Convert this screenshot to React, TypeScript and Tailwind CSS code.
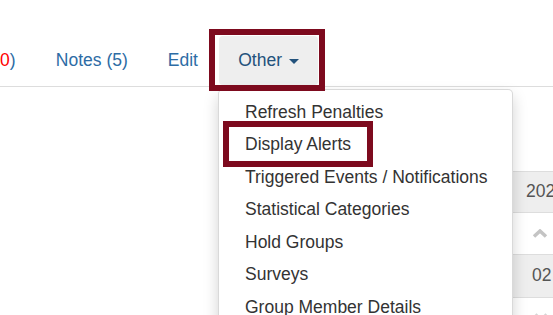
import React from "react";

const menuItems = [
  "Refresh Penalties",
  "Display Alerts",
  "Triggered Events / Notifications",
  "Statistical Categories",
  "Hold Groups",
  "Surveys",
  "Group Member Details",
];

function ChevronUp({ className }: { className?: string }) {
  return (
    <svg width="16" height="9" viewBox="0 0 16 9" className={className}>
      <polyline points="2,7.5 8,2 14,7.5" fill="none" stroke="#c4c4c4" strokeWidth="3.5" />
    </svg>
  );
}

export default function App() {
  return (
    <div className="relative w-[553px] h-[315px] overflow-hidden bg-white font-['Liberation_Sans',Arial,sans-serif] text-[17.5px]">
      {/* Tabs */}
      <nav className="flex items-start pt-[36px] pb-px border-b border-[#ddd]">
        <span className="h-[49px] flex items-center leading-[25px] pr-[19px] mr-[2.5px] whitespace-nowrap">
          <span className="text-[#ff0000]">0</span>
          <span className="text-[#2d6ca5]">)</span>
        </span>
        <a className="h-[49px] flex items-center leading-[25px] px-[18.75px] mr-[2.5px] text-[#2d6ca5] whitespace-nowrap">
          Notes (5)
        </a>
        <a className="h-[49px] flex items-center leading-[25px] px-[18.75px] mr-[2.5px] text-[#2d6ca5] whitespace-nowrap">
          Edit
        </a>
        <a className="h-[49px] flex items-center leading-[25px] pl-[19px] pr-[19px] rounded-[4px] bg-[#eee] text-[#23527c] whitespace-nowrap">
          Other
          <span className="ml-[7px] mt-[2px] w-0 h-0 border-t-[5px] border-t-[#23527c] border-x-[5px] border-x-transparent" />
        </a>
      </nav>

      {/* Content behind the menu */}
      <div className="flex">
        <div className="w-[513px] shrink-0" />
        <div className="w-[40px] shrink-0 pt-[84px] text-[#555]">
          <div className="h-[41px] border-t border-[#ddd] bg-[#eee] flex items-center pl-[13px] leading-none">
            202
          </div>
          <div className="h-[42px] border-t border-[#ddd] flex items-center pl-[19px]">
            <ChevronUp />
          </div>
          <div className="h-[43px] border-t border-[#ddd] bg-[#eee] flex items-center pl-[19px] leading-none">
            02
          </div>
          <div className="h-[30px] border-t border-[#ddd] flex gap-[2px] pl-[20px] pt-[13px]">
            <ChevronUp className="w-[7px] opacity-70" />
            <ChevronUp className="w-[7px] opacity-70" />
          </div>
        </div>
      </div>

      {/* Dropdown menu */}
      <ul className="absolute left-[218px] top-[89px] w-[295px] py-[6px] bg-white border border-[rgba(0,0,0,0.15)] rounded-[5px] shadow-[0_7px_15px_rgba(0,0,0,0.175)]">
        {menuItems.map((item) => (
          <li key={item} className="pl-[26px] py-[3.75px] leading-[25px] text-[#333] whitespace-nowrap">
            {item}
          </li>
        ))}
      </ul>

      {/* Highlight boxes */}
      <div className="absolute left-[209px] top-[29px] w-[116px] h-[62px] border-[6px] border-[#7d0a1e]" />
      <div className="absolute left-[223px] top-[121px] w-[150px] h-[46px] border-[6px] border-[#7d0a1e]" />
    </div>
  );
}
